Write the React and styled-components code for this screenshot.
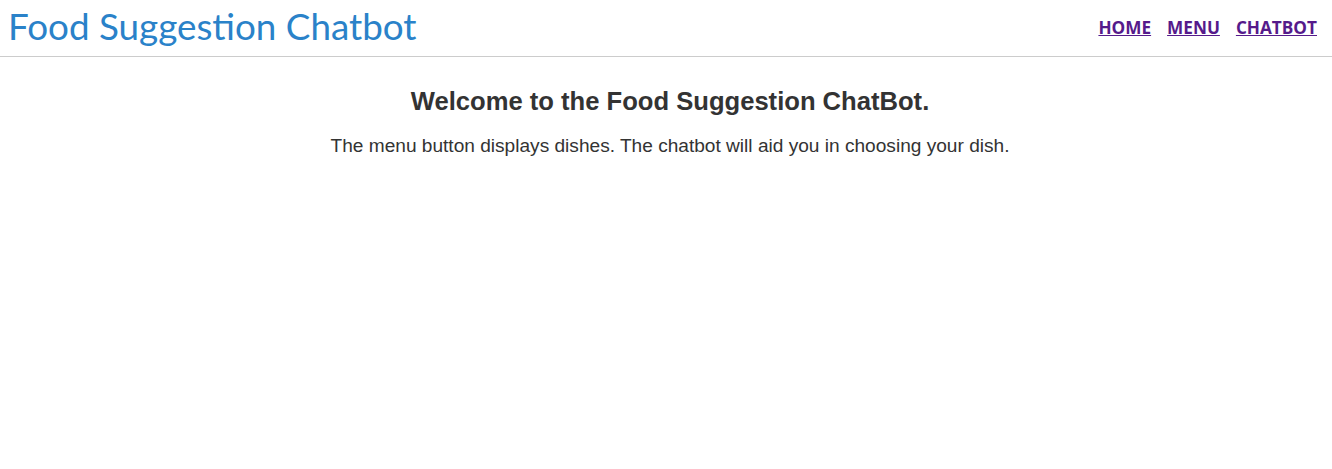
import React from 'react';
import styled, { createGlobalStyle } from 'styled-components';

const GlobalStyle = createGlobalStyle`
  html, body {
    margin: 0;
    padding: 0;
    background: #ffffff;
  }
  body {
    font-family: "Liberation Sans", Arial, sans-serif;
  }
`;

const Header = styled.header`
  display: flex;
  align-items: center;
  justify-content: space-between;
  height: 56px;
  padding: 0 15px 0 8px;
  border-bottom: 1px solid #cccccc;
`;

const Brand = styled.h1`
  margin: 0 0 4px;
  font-family: "Lato", "Open Sans", sans-serif;
  font-weight: 400;
  font-size: 36.8px;
  color: #2a82c9;
`;

const Nav = styled.nav`
  display: flex;
  gap: 16px;
  margin-bottom: 2px;
`;

const NavLink = styled.a`
  font-family: "Open Sans", "Noto Sans", sans-serif;
  font-weight: 700;
  font-size: 17.2px;
  color: #551a8b;
  text-decoration: underline;
`;

const Main = styled.main`
  display: flex;
  flex-direction: column;
  align-items: center;
  padding: 30px 0 0 8px;
  color: #333333;
`;

const Title = styled.h2`
  margin: 0 0 19px;
  font-size: 25.6px;
  font-weight: 700;
`;

const Lead = styled.p`
  margin: 0;
  font-size: 19.1px;
`;

export default function App() {
  return (
    <>
      <GlobalStyle />
      <Header>
        <Brand>Food Suggestion Chatbot</Brand>
        <Nav>
          <NavLink href="#home">HOME</NavLink>
          <NavLink href="#menu">MENU</NavLink>
          <NavLink href="#chatbot">CHATBOT</NavLink>
        </Nav>
      </Header>
      <Main>
        <Title>Welcome to the Food Suggestion ChatBot.</Title>
        <Lead>The menu button displays dishes. The chatbot will aid you in choosing your dish.</Lead>
      </Main>
    </>
  );
}
